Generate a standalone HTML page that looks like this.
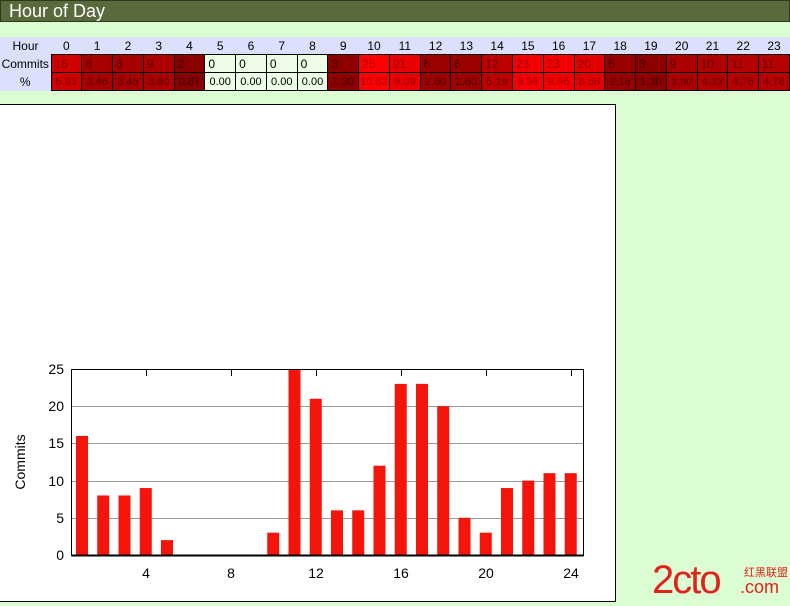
<!DOCTYPE html>
<html><head><meta charset="utf-8"><style>
body{margin:0;width:790px;height:606px;background:#dcfcd4;font-family:"Liberation Sans",sans-serif;position:relative;overflow:hidden}
.h{position:absolute;left:0;top:0;background:#5b6a3c;border:1px solid #2e3a1c;color:#fff;font-size:18px;line-height:20px;padding-left:8px;box-sizing:border-box;width:790px;height:22px}
table{position:absolute;left:0;top:37px;border-collapse:collapse;font-size:12px;width:790px;table-layout:fixed}
td,th{height:17px;padding:0 0 0 3px;border:1px solid #000;text-align:left;font-weight:normal;overflow:hidden;white-space:nowrap}
tr.hd td{background:#dde0fc;border:none;text-align:center;padding:0}
td.l{width:51px;background:#dde0fc;text-align:center;padding:0;border-top:none;border-bottom:none;border-left:none}
.box{position:absolute;left:-1px;top:104px;width:615px;height:496px;background:#fff;border:1px solid #000}
</style></head><body>
<div class="h">Hour of Day</div>
<table id="t"></table>
<div class="box"></div>
<svg style="position:absolute;left:0;top:0" width="790" height="606" font-family="Liberation Sans,sans-serif" font-size="14">
<g stroke="#999" stroke-width="1">
<line x1="72" y1="518.5" x2="583" y2="518.5"/><line x1="72" y1="481.5" x2="583" y2="481.5"/>
<line x1="72" y1="443.5" x2="583" y2="443.5"/><line x1="72" y1="406.5" x2="583" y2="406.5"/>
</g>
<g id="bars" fill="#f5140a"></g>
<rect x="71.5" y="369.5" width="512" height="186" fill="none" stroke="#000"/>
<line x1="71.5" y1="555.5" x2="583.5" y2="555.5" stroke="#000" stroke-width="2"/>
<g text-anchor="end"><text x="64" y="560">0</text><text x="64" y="523">5</text><text x="64" y="486">10</text><text x="64" y="448">15</text><text x="64" y="411">20</text><text x="64" y="374">25</text></g>
<g text-anchor="middle"><text x="146" y="578">4</text><text x="231" y="578">8</text><text x="316" y="578">12</text><text x="401" y="578">16</text><text x="486" y="578">20</text><text x="571" y="578">24</text></g>
<g stroke="#000"><line x1="146.5" y1="370" x2="146.5" y2="376"/><line x1="231.5" y1="370" x2="231.5" y2="376"/><line x1="316.5" y1="370" x2="316.5" y2="376"/><line x1="401.5" y1="370" x2="401.5" y2="376"/><line x1="486.5" y1="370" x2="486.5" y2="376"/><line x1="571.5" y1="370" x2="571.5" y2="376"/></g>
<text transform="translate(25,462) rotate(-90)" text-anchor="middle">Commits</text>
<text x="652" y="593" font-size="40" fill="#e0231a" letter-spacing="-2">2cto</text>
<text x="740" y="593" font-size="18" fill="#e0231a">.com</text>
<text x="744" y="576" font-size="11" fill="#e0231a" font-family="Noto Sans CJK SC,sans-serif">红黑联盟</text>
</svg>
<script>
var v=[16,8,8,9,2,0,0,0,0,3,25,21,6,6,12,23,23,20,5,3,9,10,11,11],tot=231;
var h='<tr class="hd"><td class="l">Hour</td>',c='<tr><td class="l">Commits</td>',p='<tr><td class="l">%</td>';
for(var i=0;i<24;i++){h+='<td>'+i+'</td>';
var r=127+Math.floor(v[i]/25*128),bg=v[i]?'rgb('+r+',0,0)':'#ecfee6',fg=v[i]?'rgb('+Math.max(0,r-85)+',0,0)':'#000';
c+='<td style="background:'+bg+';color:'+fg+'">'+v[i]+'</td>';
p+='<td style="background:'+bg+';color:'+fg+';padding:0;text-align:center;font-size:11px">'+(v[i]/tot*100).toFixed(2)+'</td>';}
document.getElementById('t').innerHTML=h+'</tr>'+c+'</tr>'+p+'</tr>';
var b='';for(var i=0;i<24;i++){var ht=v[i]*7.44;if(ht)b+='<rect x="'+(76+21.25*i)+'" y="'+(555-ht)+'" width="12" height="'+ht+'"/>';}
document.getElementById('bars').innerHTML=b;
</script>
</body></html>
